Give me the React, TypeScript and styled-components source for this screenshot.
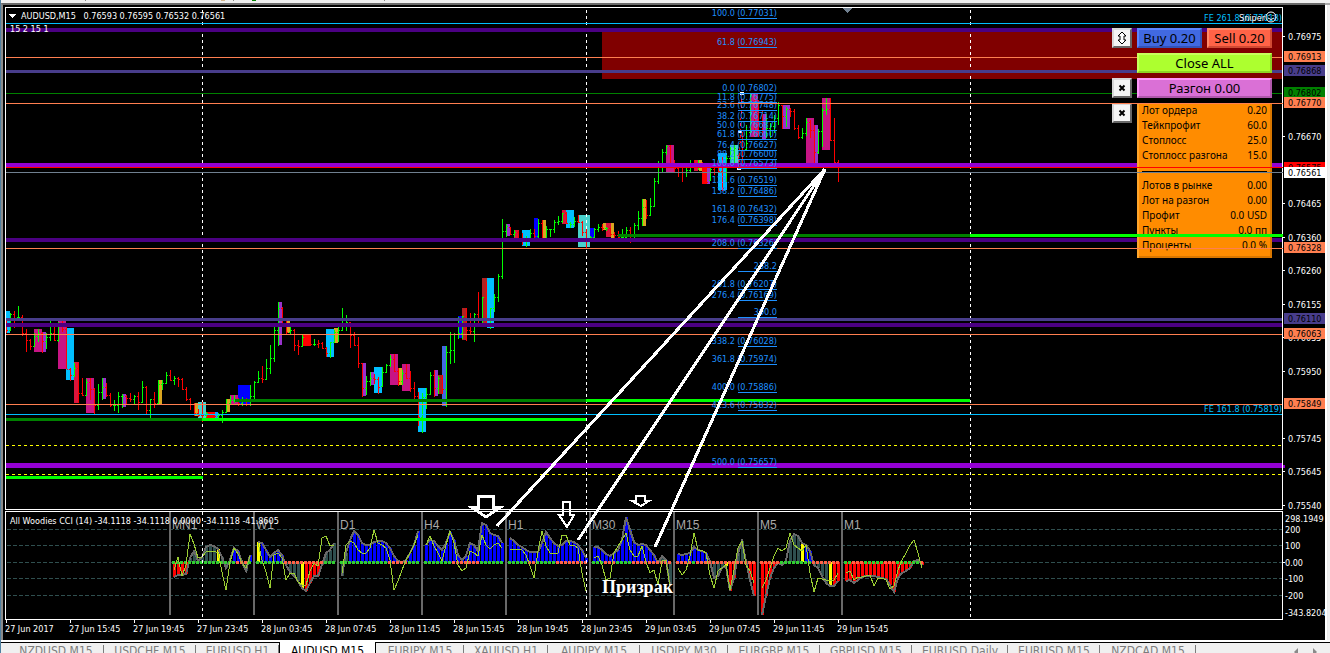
import React from "react";
import styled, { createGlobalStyle } from "styled-components";

const chartFont = '"DejaVu Sans Condensed", "DejaVu Sans", sans-serif';
const panelFont = '"Noto Sans", "Open Sans", sans-serif';

const GlobalStyle = createGlobalStyle`
  * { box-sizing: border-box; }
  html, body { margin: 0; background: #f0f0f0; }
  body { overflow: hidden; font-family: ${chartFont}; font-size: 9px; color: #fff; }
  svg { display: block; }
  svg text { font-family: ${chartFont}; font-size: 9px; white-space: pre; }
`;

/* ---------- window layout ---------- */

const Terminal = styled.div`
  display: flex;
  flex-direction: column;
  height: 100vh;
  overflow: hidden;
  border-left: 1px solid #4f7f9f;
`;

const ToolbarEdge = styled.header`
  flex: none;
  height: 3px;
  background: #efefef;
`;

const Workspace = styled.main`
  display: flex;
  flex: none;
`;

const ChartWindow = styled.section`
  flex: 1;
  min-width: 0;
  padding: 2px 0 0 2px;
  background: #000;
  border-top: 2px solid #696969;
  border-left: 2px solid #8a8a8a;
`;

const DockEdge = styled.aside`
  flex: none;
  width: 5px;
  background: linear-gradient(90deg, #fff 2px, #e4e4e4 2px, #f0f0f0 3px);
  border-top: 2px solid #a8a8a8;
`;

const ChartBody = styled.div`
  display: flex;
`;

const Plots = styled.div`
  position: relative;
  display: flex;
  flex: 1;
  flex-direction: column;
  gap: 1px;
  min-width: 0;
`;

const Frame = styled.div<{ $height: number }>`
  height: ${(p) => p.$height}px;
  border: 1px solid #fff;
`;

const Drawing = styled.svg`
  width: 100%;
  height: 100%;
  overflow: hidden;
`;

const Overlay = styled.svg`
  position: absolute;
  inset: 0;
  width: 100%;
  height: 100%;
  pointer-events: none;
`;

const TimeAxis = styled.ol`
  display: flex;
  height: 20px;
  margin: 0;
  padding: 0;
  list-style: none;
  overflow: hidden;
`;

const TimeLabel = styled.li`
  flex: none;
  width: 64px;
  line-height: 12px;
  white-space: nowrap;
  &::before {
    content: "";
    display: block;
    width: 1px;
    height: 3px;
    margin-left: 1px;
    background: #fff;
  }
`;

/* ---------- trade panel ---------- */

const TradePanel = styled.div`
  position: absolute;
  top: 21px;
  right: 11px;
  display: grid;
  grid-template-columns: 20px 135px;
  gap: 5px;
  align-items: start;
  color: #000;
  font-family: ${panelFont};
`;

const OrderRow = styled.div`
  display: flex;
  gap: 5px;
`;

const PanelButton = styled.button<{ $fill: string; $light: string; $dark: string }>`
  flex: 1;
  width: 100%;
  height: 20px;
  padding: 0;
  border: 2px solid;
  border-color: ${(p) => `${p.$light} ${p.$dark} ${p.$dark} ${p.$light}`};
  background: ${(p) => p.$fill};
  color: #000;
  font-family: ${panelFont};
  font-size: 13px;
  line-height: 16px;
  white-space: nowrap;
`;

const IconButton = styled.button`
  display: flex;
  align-items: center;
  justify-content: center;
  width: 20px;
  height: 20px;
  padding: 0;
  border: 2px solid;
  border-color: #d8d8d8 #686868 #686868 #d8d8d8;
  background: #f5f5f5;
`;

const Info = styled.dl`
  margin: 0;
  padding: 0 5px 5px;
  background: #ff8c00;
  box-shadow: inset 2px 1px #ffa52b, inset -2px -2px #d97700;
  font-size: 10px;
  line-height: 15px;
`;

const InfoRow = styled.div`
  display: flex;
  justify-content: space-between;
  height: 15px;
  white-space: nowrap;
  dt, dd { margin: 0; }
`;

const InfoRule = styled.div`
  height: 15px;
  padding-top: 8px;
  &::before {
    content: "";
    display: block;
    border-top: 1px solid #000;
  }
`;

/* ---------- chart tabs ---------- */

const TabBar = styled.nav`
  display: flex;
  flex: none;
  height: 24px;
  padding-left: 7px;
  border-top: 2px solid #fff;
  background: linear-gradient(#000 1px, #f0f0f0 1px);
`;

const Tab = styled.button<{ $width: number; $active?: boolean }>`
  position: relative;
  flex: none;
  display: flex;
  align-items: flex-start;
  justify-content: center;
  width: ${(p) => p.$width}px;
  height: 22px;
  padding: 1px 0 0;
  border: 0;
  border-left: ${(p) => (p.$active ? "1px solid #000" : "0")};
  border-right: ${(p) => (p.$active ? "1px solid #000" : "0")};
  background: ${(p) => (p.$active ? "#fff" : "transparent")};
  color: ${(p) => (p.$active ? "#000" : "#7c7c7c")};
  font-family: ${chartFont};
  font-size: 12px;
  line-height: 16px;
  white-space: nowrap;
  &::after {
    content: "";
    position: absolute;
    top: 3px;
    right: 0;
    width: 1px;
    height: 16px;
    background: ${(p) => (p.$active ? "transparent" : "#7c7c7c")};
  }
`;

const TabScroll = styled.div`
  display: flex;
  gap: 14px;
  margin-left: auto;
  padding: 6px 12px 0 0;
`;

const ScrollButton = styled.button`
  width: 5px;
  height: 8px;
  padding: 0;
  border: 0;
  background: none;
`;

/* ---------- data ---------- */

type Dir = "g" | "r";
type Bar = [Dir, number, number, number];

// direction, high, low, close of every bar, in chart rows; one bar each 4 columns
const bars: Bar[] = [
  ["r",320,333,330],["g",313,331,314],["r",311,328,320],["g",306,318,317],["r",315,336,333],["r",329,352,340],
  ["r",339,350,346],["g",333,347,336],["g",329,342,333],["r",332,353,341],["g",333,349,337],["g",321,341,333],
  ["r",323,341,340],["g",322,342,324],["r",321,332,329],["r",327,369,369],["r",368,381,375],["g",363,377,368],
  ["r",363,403,393],["r",378,396,395],["g",379,396,382],["r",378,400,389],["r",388,414,405],["g",384,410,392],
  ["g",378,400,387],["r",383,397,395],["r",393,407,405],["g",400,411,405],["g",392,413,396],["g",394,408,396],
  ["r",395,405,398],["r",393,402,399],["g",395,404,396],["r",392,410,402],["g",381,403,387],["r",386,414,410],
  ["g",399,418,399],["r",392,408,403],["g",380,404,384],["g",380,390,383],["g",372,384,375],["r",370,381,380],
  ["g",376,385,378],["r",377,387,379],["r",378,390,389],["r",387,401,399],["r",398,410,404],["r",403,416,413],
  ["r",409,417,415],["r",402,422,415],["g",412,417,413],["r",412,417,416],["r",412,418,416],["g",413,418,415],
  ["g",410,423,412],["g",399,413,404],["g",396,404,400],["g",395,403,400],["r",398,406,403],["g",397,406,399],
  ["r",398,406,404],["g",385,406,396],["g",381,400,382],["g",371,383,378],["r",366,383,379],["g",359,380,368],
  ["g",345,374,358],["g",327,362,330],["g",302,346,308],["r",307,327,324],["r",321,334,332],["g",326,334,330],
  ["r",329,351,345],["r",340,355,346],["g",335,347,337],["r",335,346,345],["r",335,346,344],["g",339,346,344],
  ["r",340,348,343],["r",342,349,348],["r",347,357,353],["g",342,358,342],["g",330,343,332],["g",327,342,330],
  ["g",308,331,323],["g",315,331,322],["r",322,348,335],["r",332,346,345],["r",337,368,363],["r",363,397,388],
  ["g",376,395,381],["g",372,386,378],["r",374,384,379],["r",377,394,387],["g",367,387,372],["g",364,373,365],
  ["g",355,367,359],["r",354,372,371],["r",368,386,381],["g",370,385,373],["r",364,379,378],["r",371,392,388],
  ["r",382,399,396],["r",392,426,417],["g",393,433,397],["g",388,409,394],["g",372,395,375],["r",370,397,388],
  ["g",376,394,378],["r",375,394,389],["g",346,407,352],["g",332,364,350],["g",333,363,334],["g",317,339,333],
  ["g",316,339,316],["r",308,341,330],["r",313,334,331],["g",313,342,314],["r",292,326,325],["g",297,326,297],
  ["r",282,325,325],["g",308,329,308],["g",294,312,297],["g",274,302,276],["g",219,279,231],["g",224,237,226],
  ["r",227,235,234],["g",230,237,232],["r",231,240,238],["r",233,245,240],["g",236,247,238],["g",229,241,233],
  ["r",229,240,236],["g",219,239,223],["r",220,241,239],["g",226,240,229],["g",229,237,229],["g",220,233,222],
  ["g",216,225,221],["g",213,223,213],["r",212,224,223],["g",222,228,224],["g",217,227,221],["r",215,223,222],
  ["r",221,236,232],["r",229,248,239],["g",236,239,237],["g",228,238,229],["g",224,232,227],["r",224,231,228],
  ["g",227,231,228],["r",228,236,234],["r",232,239,235],["r",231,240,237],["g",229,239,237],["g",227,240,230],
  ["r",227,243,238],["g",223,241,225],["g",211,230,218],["g",199,226,207],["r",200,219,215],["g",198,216,206],
  ["g",178,207,181],["g",161,184,163],["g",149,172,152],["g",145,155,146],["r",145,167,163],["r",160,172,168],
  ["r",165,177,172],["r",168,182,172],["g",167,177,170],["g",160,172,163],["r",160,167,165],["g",160,170,164],
  ["r",162,180,178],["r",168,184,182],["g",167,181,169],["r",165,175,172],["r",160,173,171],["r",157,191,188],
  ["g",155,182,158],["g",147,167,150],["g",145,168,148],["r",155,170,168],["r",132,167,150],["g",125,150,143],
  ["g",94,133,96],["r",94,137,112],["r",100,137,130],["r",110,135,130],["g",114,138,128],["g",123,138,126],
  ["g",115,133,118],["g",102,125,105],["r",105,129,116],["g",107,127,109],["r",108,117,111],["r",109,130,128],
  ["r",125,139,137],["g",128,139,133],["g",118,136,122],["r",120,138,130],["r",125,165,152],["g",129,154,131],
  ["g",108,147,110],["g",98,115,109],["r",98,141,140],["r",118,163,162],["r",160,182,172],
];

const sky = "#00bfff", violet = "#c71585", orchid = "#9932cc", gold = "#daa520", crimson = "#dc143c";
const brick = "#b22222", turq = "#48d1cc", blue = "#0000ff", red = "#ff0000";

// left, top, right, bottom, fill
const blocks: [number, number, number, number, string][] = [
  [6,311,10,333,sky],[34,329,42,352,violet],[42,332,46,352,orchid],[58,321,66,369,violet],[66,328,74,380,sky],
  [74,362,79,403,crimson],[86,378,94,413,violet],[102,378,106,399,orchid],[122,394,126,407,orchid],[158,380,162,404,gold],
  [195,403,198,416,gold],[198,402,206,418,turq],[206,412,215,418,red],[215,412,218,418,"#1e90ff"],[226,399,230,412,gold],
  [230,395,238,404,violet],[238,385,250,405,blue],[278,302,282,345,orchid],[287,321,290,333,gold],[303,335,311,346,red],
  [326,329,334,357,sky],[334,328,338,343,gold],[362,363,366,396,orchid],[371,372,374,385,orchid],[374,367,382,393,sky],
  [390,354,398,385,violet],[399,368,402,385,gold],[402,364,410,391,violet],[418,388,426,432,sky],[434,370,438,396,orchid],
  [438,375,443,394,brick],[442,346,446,406,"#4169e1"],[458,316,462,338,blue],[462,308,467,340,brick],[482,278,487,325,brick],
  [487,278,494,328,sky],[507,224,510,236,orchid],[514,230,519,240,crimson],[522,230,530,246,sky],[534,218,538,239,blue],
  [543,220,546,240,gold],[562,210,567,224,crimson],[566,210,574,228,sky],[578,215,590,247,turq],[590,228,594,238,blue],
  [603,223,606,230,gold],[606,223,611,237,crimson],[611,223,614,238,gold],[642,199,646,226,gold],[666,145,674,172,violet],
  [694,160,698,171,crimson],[699,160,702,171,gold],[702,167,707,184,red],[707,168,710,184,orchid],[718,153,727,190,sky],
  [730,145,738,168,turq],[750,94,758,137,violet],[762,114,766,139,orchid],[782,105,790,129,orchid],[806,118,814,165,violet],
  [814,125,818,165,orchid],[822,98,830,150,violet],
];

// top, thickness, colour
const levels: [number, number, string][] = [
  [23,1,"#00bfff"],[28,4,"#4b0082"],[57,1,"#ff7f50"],[70,3,"#483d8b"],[93,1,"#008000"],[103,1,"#ff7f50"],
  [163,4,"#9400d3"],[167,1,"#ff0000"],[172,1,"#708090"],[238,4,"#4b0082"],[248,1,"#ff7f50"],[318,3,"#483d8b"],
  [323,4,"#4b0082"],[334,1,"#ff7f50"],[404,1,"#ff7f50"],[414,1,"#00bfff"],[463,5,"#9400d3"],
];

// left, right, top, colour
const trends: [number, number, number, string][] = [
  [6,202,418,"#008000"],[202,586,418,"#00ff00"],[6,203,476,"#00ff00"],[235,586,399,"#008000"],
  [586,970,399,"#00ff00"],[618,970,234,"#008000"],
];

const days = [202, 586, 970];

const fibs: [string, string, number][] = [
  ["100.0","(0.77031)",18],["61.8","(0.76943)",47],["0.0","(0.76802)",93],["11.8","(0.76775)",102],["23.6","(0.76748)",110],
  ["38.2","(0.76714)",121],["50.0","(0.76687)",130],["61.8","(0.76660)",139],["76.4","(0.76627)",150],["88.2","(0.76600)",159],
  ["100.0","(0.76573)",168],["123.6","(0.76519)",185],["138.2","(0.76486)",196],["161.8","(0.76432)",214],["176.4","(0.76398)",225],
  ["208.0","(0.76326)",248],["","238.2",271],["261.8","(0.76207)",289],["276.4","(0.76169)",300],["","300.0",317],
  ["338.2","(0.76028)",346],["361.8","(0.75974)",364],["400.0","(0.75886)",392],["423.6","(0.75832)",410],["500.0","(0.75657)",467],
];

// price, row, tag colour, text colour
const prices: [string, number, string?, string?][] = [
  ["0.76975",37],["0.76913",57,"#ff7f50","#000"],["0.76868",71,"#483d8b","#000"],["0.76802",93,"#008000","#000"],
  ["0.76770",103,"#ff7f50","#000"],["0.76670",137],["0.76575",168,"#ff0000","#000"],["0.76561",173,"#fff","#000"],
  ["0.76465",204],["0.76360",238],["0.76328",248,"#ff7f50","#000"],["0.76260",271],["0.76155",305],
  ["0.76110",319,"#483d8b","#000"],["0.76055",338],["0.76063",334,"#ff7f50","#000"],["0.75950",372],
  ["0.75849",404,"#ff7f50","#000"],["0.75745",439],["0.75645",472],["0.75540",506],
];

const cciScale: [string, number][] = [
  ["298.1949",519],["200",530],["100",546],["0.00",563],["-100",579],["-200",596],["-343.8204",613],
];

interface Cci { name: string; cci: number[]; turbo: number[]; fill: string; zero: string }

// one block for each time frame: s slate, y yellow, b blue, r red; zero line g green, r red
const cciBlocks: Cci[] = [
  { name: "MN1", cci: [-15,-13,-13,-12,4,11,1,5,15,17,16,13,5,-6,2,14,11,0,-9,7],
    turbo: [-8,5,-14,-3,28,18,4,5,10,11,11,9,-10,-28,0,14,8,-1,-6,6],
    fill: "rrrrsssssssysssbbssb", zero: "ggggggggggggggggrrrg" },
  { name: "W1", cci: [20,19,12,5,9,12,7,-3,-10,-14,-19,-26,-29,-21,-14,-14,-3,9,12,19],
    turbo: [19,2,-10,-26,7,9,4,-18,-11,-11,-20,-23,-23,-9,-1,-4,24,26,16,17],
    fill: "ybbbbbbssssyrrrrssss", zero: "gggggggrrrrrrrrrrggg" },
  { name: "D1", cci: [-14,9,22,31,27,19,17,17,20,21,21,19,14,6,1,0,2,9,17,31],
    turbo: [-11,17,21,19,12,9,9,14,32,19,17,14,2,-28,-19,-8,2,9,17,27],
    fill: "ssbbbbbbbbbbbbbbbbbb", zero: "ggggggggggggrrrrrggg" },
  { name: "H4", cci: [17,22,21,16,12,19,30,22,7,2,6,19,17,11,39,37,29,27,26,19],
    turbo: [17,26,16,9,1,17,31,19,-3,-9,-6,11,9,6,27,17,13,17,19,14],
    fill: "bbbbbbbbbbbbbbbbbbbb", zero: "gggggggrrrrrrrgggggg" },
  { name: "H1", cci: [24,21,17,15,12,10,10,10,19,30,24,19,16,17,21,21,20,17,12,4],
    turbo: [13,13,13,12,7,-4,-16,11,31,16,9,9,9,27,27,17,17,14,-11,-29],
    fill: "bbbbbbbbbbbbbbbbbbbb", zero: "gggggrrgggggrrrrrrrr" },
  { name: "M30", cci: [15,15,12,8,6,9,12,22,45,32,20,17,18,17,12,7,-1,6,2,-23],
    turbo: [4,6,-3,-18,-16,9,16,22,29,12,6,6,16,0,-11,-8,-23,1,2,-24],
    fill: "bbbbbbbbbbbbbbbbssbs", zero: "gggrrrggggrrrrrrrrrr" },
  { name: "M15", cci: [8,7,8,9,15,12,11,9,1,-16,-14,-6,-4,-29,-16,9,21,1,-18,-34],
    turbo: [-6,-13,-8,6,29,12,12,9,-13,-26,-9,-6,-3,-28,-8,14,21,-3,-9,-21],
    fill: "bbbbbbbbssssyrrsssrr", zero: "rrrrgrrrrrrrrrrrrrrr" },
  { name: "M5", cci: [-53,-34,-16,-6,-1,-3,1,21,28,26,19,17,11,-3,-6,-14,-21,-24,-24,-19],
    turbo: [-26,-18,-6,6,14,11,14,29,17,14,11,17,-11,-30,-16,-17,-18,-18,-18,-11],
    fill: "rrrrrrssssybbssssyrr", zero: "rrrrrggggggggrrrrrrr" },
  { name: "M1", cci: [-19,-18,-21,-18,-15,-14,-14,-14,-15,-16,-17,-23,-30,-16,-11,-9,-6,1,2,-3],
    turbo: [-11,-9,-18,-15,-15,-14,-13,-24,-16,-16,-18,-27,-24,-8,2,9,17,22,9,-6],
    fill: "rrrrrrrrrrrrrrrrrrrr", zero: "ggrrrgggggrrrggggggr" },
];

const fills: Record<string, string> = { s: "#2f4f4f", y: "#ffff00", b: "#0000ff", r: "#ff0000" };

const times = [
  "27 Jun 2017", "27 Jun 15:45", "27 Jun 19:45", "27 Jun 23:45", "28 Jun 03:45", "28 Jun 07:45", "28 Jun 11:45",
  "28 Jun 15:45", "28 Jun 19:45", "28 Jun 23:45", "29 Jun 03:45", "29 Jun 07:45", "29 Jun 11:45", "29 Jun 15:45",
];

const tabs: [string, number][] = [
  ["NZDUSD,M15",96],["USDCHF,M15",92],["EURUSD,H1",83],["AUDUSD,M15",97],["EURJPY,M15",88],["XAUUSD,H1",84],
  ["AUDJPY,M15",92],["USDJPY,M30",88],["EURGBP,M15",92],["GBPUSD,M15",92],["EURUSD,Daily",96],["EURUSD,M15",92],["NZDCAD,M15",96],
];

const orderInfo: [string, string][] = [
  ["Лот ордера", "0.20"], ["Тейкпрофит", "60.0"], ["Стоплосс", "25.0"], ["Стоплосс разгона", "15.0"],
];
const marketInfo: [string, string][] = [
  ["Лотов в рынке", "0.00"], ["Лот на разгон", "0.00"], ["Профит", "0.0 USD"], ["Пункты", "0.0 пп"], ["Проценты", "0.0 %"],
];

/* ---------- chart parts ---------- */

const DayLines = ({ top, bottom }: { top: number; bottom: number }) => (
  <g stroke="#fff" strokeDasharray="3 3">
    {days.map((x) => <line key={x} x1={x + 0.5} x2={x + 0.5} y1={top} y2={bottom} />)}
  </g>
);

const PriceBars = () => (
  <g>
    {bars.map(([dir, high, low, close], i) => {
      const x = 6 + i * 4;
      const open = i ? Math.min(low - 1, Math.max(high, bars[i - 1][3])) : high;
      return (
        <path
          key={x}
          fill={dir === "g" ? "#00ff00" : "#ff0000"}
          d={`M${x} ${high}h1v${low - high}h-1zM${x - 1} ${open}h1v1h-1zM${x + 1} ${close}h1v1h-1z`}
        />
      );
    })}
  </g>
);

const FibLabels = () => (
  <g fill="#1e90ff">
    {fibs.map(([level, value, y]) => (
      <g key={y}>
        <text x="735" y={y - 2} textAnchor="end">{level}</text>
        <text x="777" y={y - 2} textAnchor="end">{value}</text>
        <rect x="738" y={y} width="39" height="1" />
      </g>
    ))}
  </g>
);

const PricePlot = () => (
  <Drawing shapeRendering="crispEdges" role="img" aria-label="AUDUSD M15 price chart">
    <g transform="translate(-6 -8)">
      <rect x="602" y="30" width="200%" height="49" fill="#800000" />
      {blocks.map(([l, t, r, b, fill]) => (
        <rect key={`${l}-${t}`} x={l} y={t} width={r - l} height={b - t} fill={fill} />
      ))}
      <DayLines top={10} bottom={510} />
      <PriceBars />
      {levels.map(([y, h, fill]) => <rect key={y} x="6" y={y} width="200%" height={h} fill={fill} />)}
      {trends.map(([l, r, y, fill]) => (
        <rect key={`${l}-${y}`} x={l} y={y} width={r - l} height="3" fill={fill} />
      ))}
      <g stroke="#ffff00" strokeDasharray="3 3">
        <line x1="6" x2="200%" y1="445.5" y2="445.5" />
        <line x1="6" x2="200%" y1="474.5" y2="474.5" />
      </g>
      <line x1="739" y1="168" x2="742" y2="94" stroke="#ff0000" strokeDasharray="3 3" />
      <g fill="#fff">
        <rect x="740" y="92" width="4" height="3" />
        <rect x="738" y="130" width="4" height="3" />
        <rect x="737" y="167" width="4" height="3" />
      </g>
      <FibLabels />
      <path d="M842 8h10l-5 5z" fill="#708090" />
      <path d="M9 14h7l-3.500 4z" fill="#fff" />
      <g fill="#fff">
        <text x="21" y="19">{"AUDUSD,M15   0.76593 0.76595 0.76532 0.76561"}</text>
        <text x="10" y="32">15 2 15 1</text>
      </g>
    </g>
    <g textAnchor="end" fill="#00bfff">
      <text x="100%" y="13">FE 261.8 (0.77018)</text>
      <text x="100%" y="404">FE 161.8 (0.75819)</text>
    </g>
    <svg x="100%" overflow="visible">
      <g transform="translate(-11 9)" fill="none" stroke="#fff" shapeRendering="auto">
        <circle r="5" />
        <path d="M-3 1q3 3 6 0M-2 -2v1M2 -2v1" />
        <text x="-6" y="4" textAnchor="end" fill="#fff" stroke="none">Sniper</text>
      </g>
    </svg>
  </Drawing>
);

const CciPlot = () => (
  <Drawing shapeRendering="crispEdges" role="img" aria-label="All Woodies CCI">
    <g transform="translate(-6 -512)">
      <g stroke="#2f4f4f" strokeDasharray="4 2">
        {[529, 545, 562, 578, 595].map((y) => <line key={y} x1="7" x2="200%" y1={y + 0.5} y2={y + 0.5} />)}
      </g>
      {cciBlocks.map((block, n) => {
        const left = 173 + n * 84;
        const points = (values: number[]) => values.map((v, k) => `${left + 1 + k * 4},${562 - v}`).join(" ");
        return (
          <g key={block.name}>
            <rect x={left - 4} y="512" width="2" height="103" fill="#696969" />
            {block.cci.map((v, k) => (
              <rect key={k} x={left + k * 4} y={v > 0 ? 562 - v : 562} width="3" height={Math.abs(v)} fill={fills[block.fill[k]]} />
            ))}
            <polyline points={points(block.cci)} fill="none" stroke="#696969" strokeWidth="2" />
            {block.cci.map((_, k) => (
              <rect key={k} x={left + k * 4 - 1} y="561" width="3" height="3" fill={block.zero[k] === "g" ? "#32cd32" : "#ff6347"} />
            ))}
            <polyline points={points(block.turbo)} fill="none" stroke="#9acd32" />
            <text x={left - 1} y="529" fill="#a9a9a9" style={{ font: '12px "Liberation Sans", sans-serif' }}>{block.name}</text>
          </g>
        );
      })}
      <DayLines top={512} bottom={619} />
      <text x="10" y="524" fill="#fff">All Woodies CCI (14) -34.1118 -34.1118 0.0000 -34.1118 -41.8605</text>
    </g>
  </Drawing>
);

const Annotations = () => (
  <Overlay shapeRendering="crispEdges">
    <g transform="translate(-5 -7)">
      <rect x="6" y="103" width="200%" height="1" fill="#ff7f50" />
      <rect x="6" y="167" width="200%" height="1" fill="#ff0000" />
      <rect x="6" y="172" width="200%" height="1" fill="#708090" />
      <rect x="970" y="234" width="200%" height="3" fill="#00ff00" />
      <rect x="970" y="248" width="200%" height="1" fill="#ff7f50" />
      <g fill="none" stroke="#fff" strokeWidth="3">
        <path d="M825 169L497 526M825 169L578 540M825 169L655 547" />
        <path d="M478 496H493V507H501L486 517L471 507H478Z" />
        <path d="M563 502H570V515H574L567 527L559 515H563Z" strokeWidth="2" />
        <path d="M636 496H645V501H649L641 506L632 501H636Z" strokeWidth="2" />
      </g>
      <text x="602" y="593" fill="#fff" style={{ font: 'bold 18px "Liberation Serif", serif' }}>Призрак</text>
    </g>
  </Overlay>
);

const ScaleSvg = styled.svg`
  flex: none;
  width: 42px;
  overflow: hidden;
`;

const PriceScale = () => (
  <ScaleSvg shapeRendering="crispEdges">
    <g transform="translate(-1283 -7)">
      {prices.map(([label, y, tag, ink]) => (
        <g key={label}>
          {tag ? <rect x="1284" y={y - 6} width="41" height="11" fill={tag} /> : <rect x="1283" y={y - 1} width="2" height="1" fill="#fff" />}
          <text x="1288" y={y + 3} fill={ink || "#fff"}>{label}</text>
        </g>
      ))}
      {cciScale.map(([label, y]) => <text key={label} x="1285" y={y + 3} fill="#fff">{label}</text>)}
      <rect x="1283" y="465" width="2" height="3" fill="#9400d3" />
      <rect x="1283" y="562" width="2" height="1" fill="#fff" />
    </g>
  </ScaleSvg>
);

const CrossIcon = () => (
  <svg width="8" height="8" viewBox="0 0 8 8" aria-hidden="true">
    <path d="M1.500 1.500L6.500 6.500M6.500 1.500L1.500 6.500" stroke="#000" strokeWidth="2" />
  </svg>
);

const UpDownIcon = () => (
  <svg width="12" height="14" viewBox="0 0 12 14" aria-hidden="true">
    <path d="M6 1L10 5H8V9H10L6 13L2 9H4V5H2Z" fill="#fff" stroke="#000" />
  </svg>
);

const InfoList = ({ rows }: { rows: [string, string][] }) => (
  <>
    {rows.map(([name, value]) => (
      <InfoRow key={name}><dt>{name}</dt><dd>{value}</dd></InfoRow>
    ))}
  </>
);

export default function App() {
  return (
    <>
      <GlobalStyle />
      <Terminal>
        <ToolbarEdge>
          <svg width="420" height="3" aria-hidden="true">
            <path d="M84 0h1v1h-1zM232 0h1v1h-1zM383 0h1v1h-1z" fill="#888" />
            <rect x="220" width="4" height="1" fill="#d2b48c" />
            <rect x="251" width="4" height="1" fill="#008000" />
          </svg>
        </ToolbarEdge>
        <Workspace>
          <ChartWindow>
            <ChartBody>
              <Plots>
                <Frame $height={503}><PricePlot /></Frame>
                <Frame $height={109}><CciPlot /></Frame>
                <TradePanel>
                  <IconButton aria-label="Move panel"><UpDownIcon /></IconButton>
                  <OrderRow>
                    <PanelButton $fill="#4169e1" $light="#5c85ff" $dark="#3353b8">Buy 0.20</PanelButton>
                    <PanelButton $fill="#ff6347" $light="#ff8a6b" $dark="#d14a33">Sell 0.20</PanelButton>
                  </OrderRow>
                  <span />
                  <PanelButton $fill="#adff2f" $light="#c8ff5c" $dark="#8ed422">Close ALL</PanelButton>
                  <IconButton aria-label="Close boost"><CrossIcon /></IconButton>
                  <PanelButton $fill="#da70d6" $light="#ff96fa" $dark="#b058ac">Разгон 0.00</PanelButton>
                  <IconButton aria-label="Close details"><CrossIcon /></IconButton>
                  <Info>
                    <InfoList rows={orderInfo} />
                    <InfoRule />
                    <InfoList rows={marketInfo} />
                  </Info>
                </TradePanel>
                <Annotations />
              </Plots>
              <PriceScale />
            </ChartBody>
            <TimeAxis>
              {times.map((t) => <TimeLabel key={t}>{t}</TimeLabel>)}
            </TimeAxis>
          </ChartWindow>
          <DockEdge />
        </Workspace>
        <TabBar>
          {tabs.map(([name, width], i) => (
            <Tab key={name} $width={width} $active={i === 3}>{name}</Tab>
          ))}
          <TabScroll>
            <ScrollButton aria-label="Scroll tabs left">
              <svg width="5" height="8"><path d="M4 0v8L0 4z" fill="#8a8a8a" /></svg>
            </ScrollButton>
            <ScrollButton aria-label="Scroll tabs right">
              <svg width="5" height="8"><path d="M0 0v8l4-4z" fill="#8a8a8a" /></svg>
            </ScrollButton>
          </TabScroll>
        </TabBar>
      </Terminal>
    </>
  );
}
